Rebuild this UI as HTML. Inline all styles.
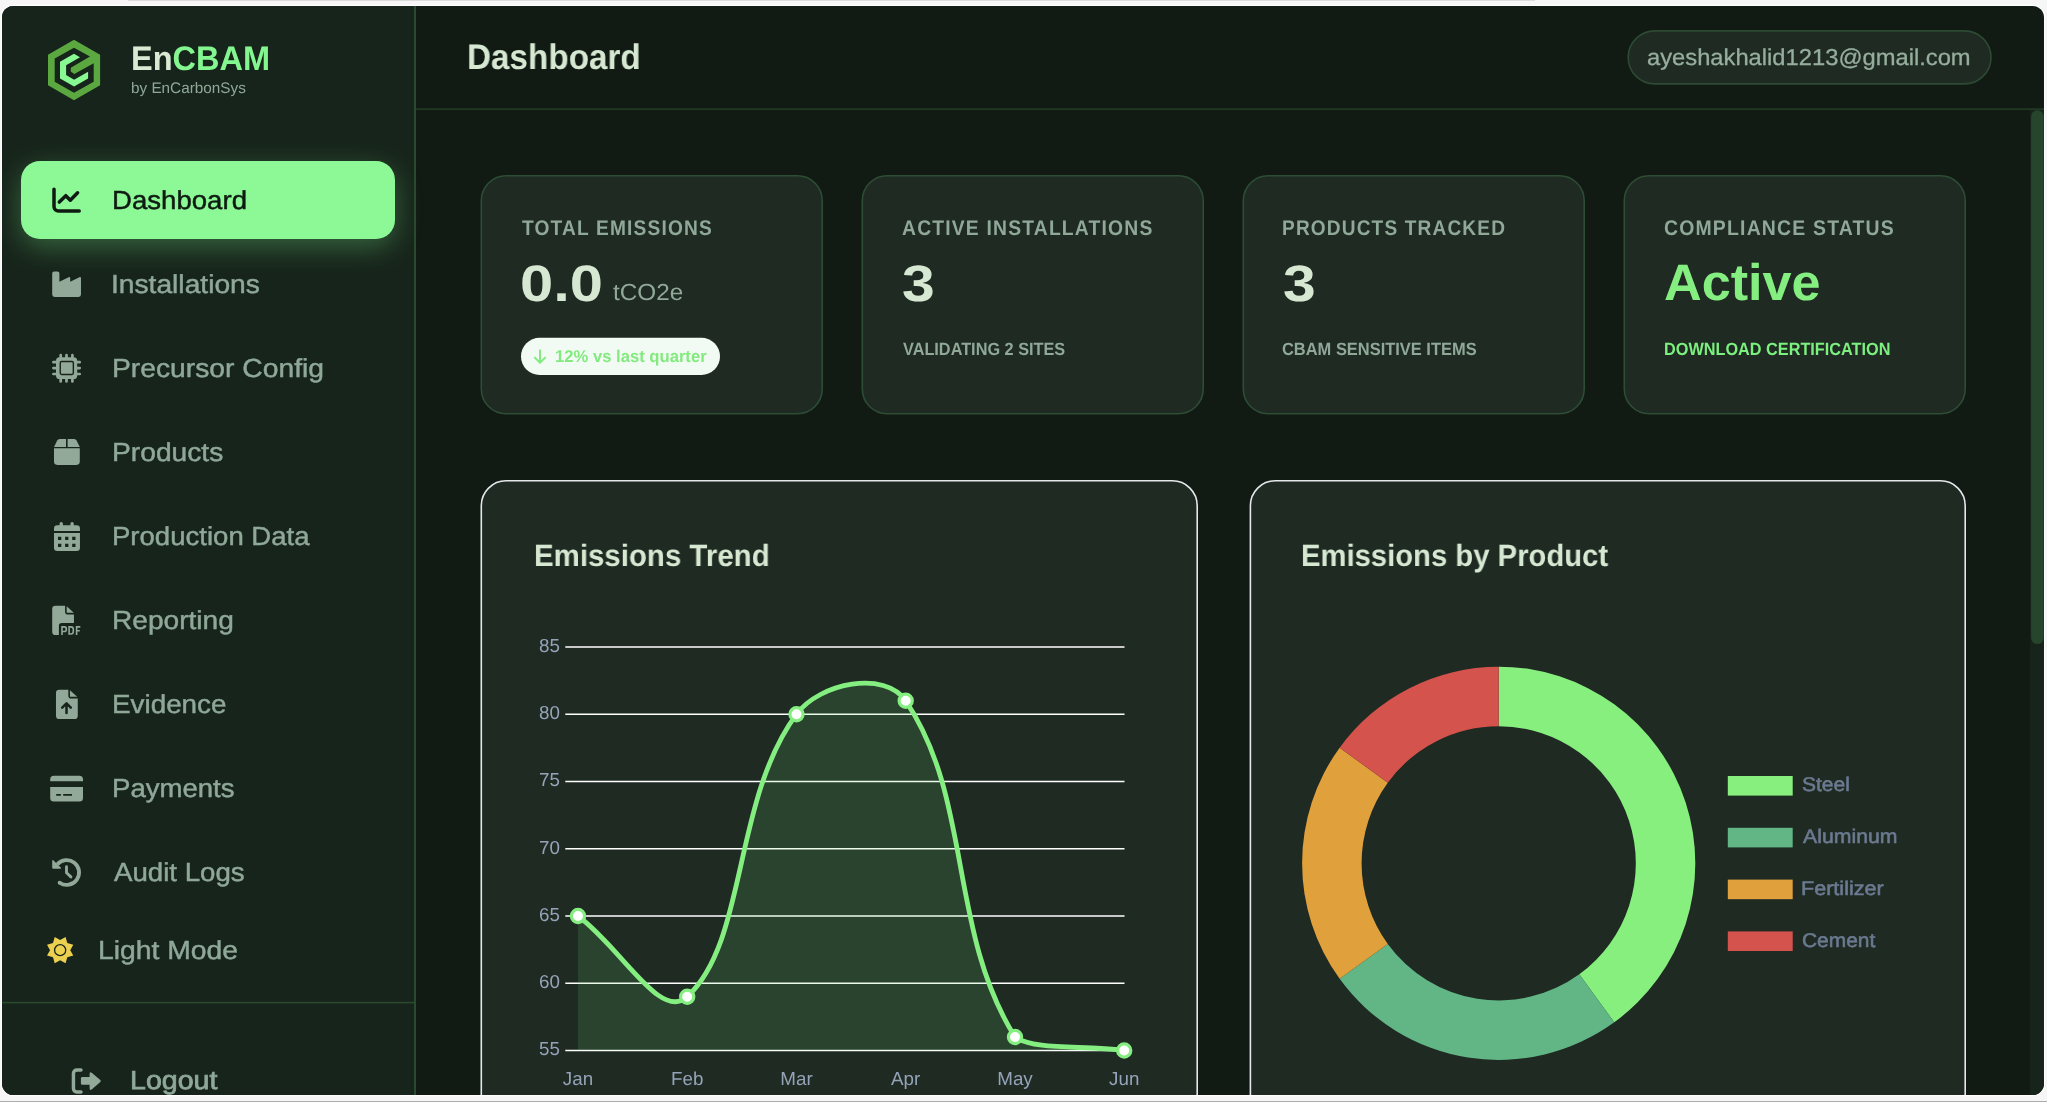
<!DOCTYPE html>
<html lang="en">
<head>
<meta charset="utf-8">
<title>EnCBAM Dashboard</title>
<style>
*{box-sizing:border-box;margin:0;padding:0}
html,body{width:2047px;height:1102px;overflow:hidden;background:#f6f6f6;font-family:"Liberation Sans",sans-serif;}
.abs{position:absolute}
#win{position:absolute;left:2px;top:6px;width:2042px;height:1089.2px;border-radius:11.5px;overflow:hidden;background:#111a13;box-shadow:0 0 0 1.2px #ffffff}
#botline{position:absolute;left:0;top:1101px;width:2047px;height:1px;background:#a9adab}
#topline{position:absolute;left:128px;top:0;width:1407px;height:1px;background:#dcdcdc}
#stage{position:absolute;left:-2px;top:-6px;width:2047px;height:1102px}
#sidebar{position:absolute;left:2px;top:6px;width:412px;height:1090px;background:#17241b}
.t{position:absolute;white-space:nowrap;line-height:1;transform-origin:0 0;text-rendering:geometricPrecision}
svg text{text-rendering:geometricPrecision}
#stage{will-change:transform}
.ax{fill:#94a3b8;font-size:18.8px;font-family:"Liberation Sans",sans-serif}
.lg{fill:#66758a;font-size:19.4px;font-weight:bold;font-family:"Liberation Sans",sans-serif}
</style>
</head>
<body>
<div id="topline"></div>
<div id="win"><div id="stage">
  <div id="sidebar"></div>
  <!-- active nav pill -->
  <div class="abs" id="active" style="left:21px;top:161px;width:374px;height:78px;border-radius:19px;background:#8cf996;box-shadow:0 8px 28px rgba(120,240,140,0.32)"></div>

  <svg class="abs" id="boxes" style="left:0;top:0" width="2047" height="1102" viewBox="0 0 2047 1102">
    <!-- sidebar border, divider, header border -->
    <rect x="414" y="6" width="2" height="1090" fill="#2a4a30"/>
    <rect x="2" y="1001.8" width="412" height="1.6" fill="#2a4a30"/>
    <rect x="416" y="108.35" width="1628" height="1.6" fill="#223c27"/>
    <!-- scrollbar -->
    <rect x="2030" y="110" width="14" height="986" fill="#17241b"/>
    <rect x="2031.1" y="110.3" width="12.6" height="533.7" rx="6.3" fill="#27442d"/>
    <!-- email pill -->
    <rect x="1628.2" y="30.9" width="362.8" height="53" rx="26.5" fill="#1f2a23" stroke="#2d4a33" stroke-width="1.6"/>
    <!-- stat cards -->
    <g fill="#1f2a23" stroke="#2d4d35" stroke-width="1.6">
      <rect x="481.3" y="175.7" width="340.9" height="238.1" rx="24.8"/>
      <rect x="862.3" y="175.7" width="340.9" height="238.1" rx="24.8"/>
      <rect x="1243.3" y="175.7" width="340.9" height="238.1" rx="24.8"/>
      <rect x="1624.3" y="175.7" width="340.9" height="238.1" rx="24.8"/>
    </g>
    <rect x="521" y="337.8" width="199" height="37.2" rx="18.6" fill="#f2fbf3"/>
    <!-- chart cards -->
    <g fill="#1f2a23" stroke="#e5e7eb" stroke-width="1.6">
      <rect x="481.3" y="480.8" width="715.9" height="700" rx="24.8"/>
      <rect x="1250.4" y="480.8" width="714.8" height="700" rx="24.8"/>
    </g>
  </svg>

  <div class="t" id="brand" style="left:130.57px;top:42.01px;font-size:34.01px;transform-origin:0 28.79px;transform:scale(0.9560,1.0000);font-weight:bold;color:#dbe8d4">En<span style="color:#84f690">CBAM</span></div>
  <div class="t" id="brandsub" style="left:131.16px;top:81.48px;font-size:15.26px;transform-origin:0 12.92px;transform:scale(1.0032,1.0000);color:#8fa898">by EnCarbonSys</div>
  <div class="t" id="n0" style="left:111.75px;top:187.38px;font-size:26.02px;transform-origin:0 22.02px;transform:scale(1.0607,1.0000);-webkit-text-stroke:0.45px;color:#0f1a12">Dashboard</div>
  <div class="t" id="n1" style="left:111.45px;top:271.38px;font-size:26.02px;transform-origin:0 22.02px;transform:scale(1.0835,1.0000);-webkit-text-stroke:0.45px;color:#8fa898">Installations</div>
  <div class="t" id="n2" style="left:111.75px;top:355.38px;font-size:26.02px;transform-origin:0 22.02px;transform:scale(1.0861,1.0000);-webkit-text-stroke:0.45px;color:#8fa898">Precursor Config</div>
  <div class="t" id="n3" style="left:111.75px;top:439.38px;font-size:26.02px;transform-origin:0 22.02px;transform:scale(1.0838,1.0000);-webkit-text-stroke:0.45px;color:#8fa898">Products</div>
  <div class="t" id="n4" style="left:111.79px;top:523.38px;font-size:26.02px;transform-origin:0 22.02px;transform:scale(1.0589,1.0000);-webkit-text-stroke:0.45px;color:#8fa898">Production Data</div>
  <div class="t" id="n5" style="left:111.76px;top:607.38px;font-size:26.02px;transform-origin:0 22.02px;transform:scale(1.0804,1.0000);-webkit-text-stroke:0.45px;color:#8fa898">Reporting</div>
  <div class="t" id="n6" style="left:111.77px;top:691.38px;font-size:26.02px;transform-origin:0 22.02px;transform:scale(1.0696,1.0000);-webkit-text-stroke:0.45px;color:#8fa898">Evidence</div>
  <div class="t" id="n7" style="left:111.79px;top:775.38px;font-size:26.02px;transform-origin:0 22.02px;transform:scale(1.0592,1.0000);-webkit-text-stroke:0.45px;color:#8fa898">Payments</div>
  <div class="t" id="n8" style="left:113.85px;top:859.38px;font-size:26.02px;transform-origin:0 22.02px;transform:scale(1.0631,1.0000);-webkit-text-stroke:0.45px;color:#8fa898">Audit Logs</div>
  <div class="t" id="n9" style="left:98.28px;top:937.38px;font-size:26.02px;transform-origin:0 22.02px;transform:scale(1.0883,1.0000);-webkit-text-stroke:0.45px;color:#8fa898">Light Mode</div>
  <div class="t" id="logout" style="left:130.39px;top:1067.25px;font-size:26.16px;transform-origin:0 22.15px;transform:scale(1.0920,1.0000);-webkit-text-stroke:0.75px;color:#8fa898">Logout</div>
  <div class="t" id="htitle" style="left:467.31px;top:40.08px;font-size:35.47px;transform-origin:0 30.02px;transform:scale(0.9378,1.0000);font-weight:bold;color:#d6e8d2">Dashboard</div>
  <div class="t" id="email" style="left:1647.44px;top:45.66px;font-size:22.97px;transform-origin:0 19.44px;transform:scale(1.0335,1.0000);-webkit-text-stroke:0.3px;color:#96ae9c">ayeshakhalid1213@gmail.com</div>
  <div class="t" id="l1" style="left:521.62px;top:217.84px;font-size:21.22px;transform-origin:0 17.96px;transform:scale(0.9020,1.0000);letter-spacing:1.3px;font-weight:bold;color:#8fa898">TOTAL EMISSIONS</div>
  <div class="t" id="b1" style="left:520.40px;top:258.17px;font-size:51.31px;transform-origin:0 43.43px;transform:scale(1.1636,1.0000);font-weight:bold;color:#d6e8d2">0.0</div>
  <div class="t" id="unit" style="left:612.65px;top:280.81px;font-size:23.26px;transform-origin:0 19.69px;transform:scale(1.0447,1.0000);color:#8fa898">tCO2e</div>
  <div class="t" id="badget" style="left:555.15px;top:348.20px;font-size:17.01px;transform-origin:0 14.40px;transform:scale(0.9785,1.0000);font-weight:bold;color:#84ea80">12% vs last quarter</div>
  <div class="t" id="l2" style="left:902.22px;top:217.84px;font-size:21.22px;transform-origin:0 17.96px;transform:scale(0.9102,1.0000);letter-spacing:1.3px;font-weight:bold;color:#8fa898">ACTIVE INSTALLATIONS</div>
  <div class="t" id="b2" style="left:902.21px;top:258.17px;font-size:51.31px;transform-origin:0 43.43px;transform:scale(1.1468,1.0000);font-weight:bold;color:#d6e8d2">3</div>
  <div class="t" id="s2" style="left:902.85px;top:341.39px;font-size:17.73px;transform-origin:0 15.01px;transform:scale(0.9187,1.0000);font-weight:bold;color:#8fa898">VALIDATING 2 SITES</div>
  <div class="t" id="l3" style="left:1281.90px;top:217.84px;font-size:21.22px;transform-origin:0 17.96px;transform:scale(0.8983,1.0000);letter-spacing:1.3px;font-weight:bold;color:#8fa898">PRODUCTS TRACKED</div>
  <div class="t" id="b3" style="left:1283.21px;top:258.17px;font-size:51.31px;transform-origin:0 43.43px;transform:scale(1.1468,1.0000);font-weight:bold;color:#d6e8d2">3</div>
  <div class="t" id="s3" style="left:1282.43px;top:341.39px;font-size:17.73px;transform-origin:0 15.01px;transform:scale(0.9280,1.0000);font-weight:bold;color:#8fa898">CBAM SENSITIVE ITEMS</div>
  <div class="t" id="l4" style="left:1663.83px;top:217.84px;font-size:21.22px;transform-origin:0 17.96px;transform:scale(0.9151,1.0000);letter-spacing:1.3px;font-weight:bold;color:#8fa898">COMPLIANCE STATUS</div>
  <div class="t" id="b4" style="left:1663.75px;top:256.77px;font-size:51.31px;transform-origin:0 43.43px;transform:scale(1.0174,1.0000);font-weight:bold;color:#84ee80">Active</div>
  <div class="t" id="s4" style="left:1663.51px;top:341.39px;font-size:17.73px;transform-origin:0 15.01px;transform:scale(0.9176,1.0000);font-weight:bold;color:#7cf07e">DOWNLOAD CERTIFICATION</div>
  <div class="t" id="ct1" style="left:533.73px;top:541.32px;font-size:30.81px;transform-origin:0 26.08px;transform:scale(0.9561,1.0000);font-weight:bold;color:#d6e8d2">Emissions Trend</div>
  <div class="t" id="ct2" style="left:1301.40px;top:541.32px;font-size:30.81px;transform-origin:0 26.08px;transform:scale(0.9494,1.0000);font-weight:bold;color:#d6e8d2">Emissions by Product</div>
  <div class="t" id="lg1" style="left:1801.95px;top:775.67px;font-size:19.77px;transform-origin:0 16.73px;transform:scale(1.0615,1.0000);-webkit-text-stroke:0.55px;color:#6b7a90">Steel</div>
  <div class="t" id="lg2" style="left:1802.98px;top:828.21px;font-size:19.77px;transform-origin:0 16.73px;transform:scale(1.0755,1.0000);-webkit-text-stroke:0.55px;color:#6b7a90">Aluminum</div>
  <div class="t" id="lg3" style="left:1801.34px;top:880.01px;font-size:19.77px;transform-origin:0 16.73px;transform:scale(1.0911,1.0000);-webkit-text-stroke:0.55px;color:#6b7a90">Fertilizer</div>
  <div class="t" id="lg4" style="left:1802.17px;top:931.81px;font-size:19.77px;transform-origin:0 16.73px;transform:scale(1.0596,1.0000);-webkit-text-stroke:0.55px;color:#6b7a90">Cement</div>

  <svg class="abs" id="icons" style="left:0;top:0" width="2047" height="1102" viewBox="0 0 2047 1102">
    <!-- logo -->
    <path fill="#5ba840" fill-rule="evenodd" d="M74 39.7 L100.1 54.7 L100.1 85.3 L74 100.3 L48 85.3 L48 54.7 Z M74 47.7 L90 56.6 L70.8 67.7 L70.8 71.5 L74.3 74.1 L93.7 63.2 L93.7 81.7 L74 92.8 L54.7 81.7 L54.7 58.6 Z"/>
    <path fill="#88f892" d="M74 53.7 L80 57.2 L66.1 65.2 L66.1 74.9 L74.1 79.8 L88.1 71.8 L88.1 78.6 L74.1 86.5 L60 78.6 L60 61.8 Z"/>

    <!-- dashboard: chart-line -->
    <g fill="none" stroke="#0f1a12" stroke-width="3.5" stroke-linecap="round" stroke-linejoin="round">
      <path d="M54 189.2 V206.5 a4.5 4.5 0 0 0 4.5 4.5 H79.2"/>
      <path d="M59.3 202.1 L65.8 195.7 L70.3 200.2 L77.6 192.8"/>
    </g>

    <g fill="#92a898">
    <!-- installations: industry -->
    <path d="M54.2 271.4 H57.6 Q59.4 271.4 59.4 273.2 V281.8 L68.6 277.2 Q70.2 276.5 70.2 278.2 V281.8 L79.4 277.2 Q81 276.5 81 278.2 V294.5 Q81 296.9 78.6 296.9 H54.6 Q52.2 296.9 52.2 294.5 V273.2 Q52.2 271.4 54.2 271.4 Z"/>

    <!-- microchip -->
    <rect x="56" y="357.2" width="21.2" height="21.8" rx="3.6"/>
    <g stroke="#92a898" stroke-width="2.7" stroke-linecap="round">
      <path d="M60.7 355.2V358M66.5 355.2V358M72.4 355.2V358M60.7 378V381.5M66.5 378V381.5M72.4 378V381.5"/>
      <path d="M53.4 362.2H57M53.4 368.1H57M53.4 374H57M76 362.2H79.7M76 368.1H79.7M76 374H79.7"/>
    </g>
    <rect x="60.25" y="361.55" width="13.1" height="12.9" rx="1.4" fill="none" stroke="#17241b" stroke-width="1.4"/>

    <!-- products: box -->
    <path d="M54 448.2 H79.8 V461.6 Q79.8 464.9 76.5 464.9 H57.3 Q54 464.9 54 461.6 Z"/>
    <path d="M54 446.9 L57.2 440.6 Q58 439.1 59.7 439.1 H66 V446.9 Z"/>
    <path d="M79.8 446.9 L76.6 440.6 Q75.8 439.1 74.1 439.1 H67.6 V446.9 Z"/>

    <!-- production data: calendar -->
    <path d="M54 530.9 V528.6 Q54 525.3 57.3 525.3 H59.55 V523.7 a1.7 1.7 0 0 1 3.4 0 V525.3 H70.4 V523.7 a1.7 1.7 0 0 1 3.4 0 V525.3 H76.65 Q79.95 525.3 79.95 528.6 V530.9 Z"/>
    <path fill-rule="evenodd" d="M54 532.9 H79.95 V547.7 Q79.95 551 76.65 551 H57.3 Q54 551 54 547.7 Z M58 536.7h3.3v3.3h-3.3z M65.1 536.7h3.3v3.3h-3.3z M72.2 536.7h3.3v3.3h-3.3z M58 543.8h3.3v3.3h-3.3z M65.1 543.8h3.3v3.3h-3.3z M72.2 543.8h3.3v3.3h-3.3z"/>

    <!-- reporting: file-pdf -->
    <path d="M55.5 605.8 H65.06 V611.7 Q65.06 614.5 67.9 614.5 H73.96 V623.06 H61.6 Q58.9 623.06 58.9 625.8 V635.04 H55.5 Q52.2 635.04 52.2 631.7 V609.1 Q52.2 605.8 55.5 605.8 Z"/>
    <path d="M66.7 606.2 L73.8 612.8 H66.7 Z"/>
    <g fill="none" stroke="#92a898" stroke-width="1.6">
      <path d="M62 634.9V626.9H64.3Q66.4 626.9 66.4 629.2Q66.4 631.5 64.3 631.5H62"/>
      <path d="M69.1 626.9V634H70.9Q73.3 634 73.3 631.6V629.3Q73.3 626.9 70.9 626.9Z"/>
      <path d="M76.6 634.9V626.9H80.3M76.6 630.7H79.8"/>
    </g>

    <!-- evidence: file-arrow-up -->
    <path d="M59.3 689.8 H68.33 V695.7 Q68.33 698.5 71.2 698.5 H77.77 V715.7 Q77.77 719.04 74.4 719.04 H59.3 Q55.98 719.04 55.98 715.7 V693.1 Q55.98 689.8 59.3 689.8 Z"/>
    <path d="M69.96 690.2 L77.2 696.8 H69.96 Z"/>
    <g fill="none" stroke="#17241b" stroke-width="2.5" stroke-linecap="round" stroke-linejoin="round">
      <path d="M66.5 713 V703.6 M62.2 707.6 L66.5 703.3 L70.8 707.6"/>
    </g>

    <!-- payments: credit card -->
    <path d="M50.2 781.25 V779.4 Q50.2 775.8 53.8 775.8 H79.4 Q83 775.8 83 779.4 V781.25 Z"/>
    <path fill-rule="evenodd" d="M50.2 787.06 H83 V798 Q83 801.6 79.4 801.6 H53.8 Q50.2 801.6 50.2 798 Z M56.2 794.1h4.7v1.7h-4.7z M63.2 794.1h8.8v1.7h-8.8z"/>

    <!-- audit logs: clock-rotate-left -->
    <path d="M53.5 860.4 Q52.2 859.3 52.2 861.1 V867.5 Q52.2 868.7 53.4 868.7 H60.1 Q61.9 868.7 60.7 867.4 Z"/>
    <g fill="none" stroke="#92a898" stroke-linecap="round" stroke-linejoin="round">
      <path stroke-width="3.8" stroke-linecap="butt" d="M57.2 864.53 A12.4 12.4 0 1 1 59.7 882.75"/>
      <path stroke-width="2.9" d="M66.5 866.7 V872.8 L70.9 876.9"/>
    </g>
    <circle cx="59.6" cy="882.7" r="1.9"/>

    <!-- logout: right-from-bracket -->
    <path fill="none" stroke="#92a898" stroke-width="3.45" stroke-linecap="round" d="M81 1070 H76.8 A3.35 3.35 0 0 0 73.45 1073.35 V1088.6 A3.35 3.35 0 0 0 76.8 1091.95 H81"/>
    <path d="M82.4 1077.06 H89.6 V1074 Q89.6 1071.2 92 1073 L100.3 1080.1 Q101.4 1081.06 100.3 1082 L92 1089.2 Q89.6 1091 89.6 1088.2 V1084.87 H82.4 Q80.9 1084.87 80.9 1083.4 V1078.5 Q80.9 1077.06 82.4 1077.06 Z"/>
    </g>

    <!-- light mode: sun -->
    <path fill="#ecd04f" d="M60.15 940.05 L65.58 937.03 L67.29 943.01 L73.27 944.72 L70.25 950.15 L73.27 955.58 L67.29 957.29 L65.58 963.27 L60.15 960.25 L54.72 963.27 L53.01 957.29 L47.03 955.58 L50.05 950.15 L47.03 944.72 L53.01 943.01 L54.72 937.03 Z"/>
    <circle cx="60.15" cy="950.15" r="5.55" fill="none" stroke="#17241b" stroke-width="1.3"/>

    <!-- badge arrow -->
    <path d="M540 350.3 V362.4 M534.9 357.6 L540 362.7 L545.1 357.6" fill="none" stroke="#84ea80" stroke-width="2" stroke-linecap="round" stroke-linejoin="round"/>
  </svg>


  <svg class="abs" id="charts" style="left:0;top:0" width="2047" height="1102" viewBox="0 0 2047 1102">
    <g stroke="#ffffff" stroke-width="1.6">
      <path d="M565.3 647H1124.5M565.3 714.25H1124.5M565.3 781.5H1124.5M565.3 848.75H1124.5M565.3 916H1124.5M565.3 983.25H1124.5M565.3 1050.5H1124.5"/>
    </g>
    <path fill="rgba(110,220,110,0.14)" d="M578.0 916.0 C621.7 948.3 660.2 1021.7 687.2 996.7 C747.6 941.0 732.4 801.1 796.5 714.2 C819.8 682.7 885.0 670.1 905.7 700.8 C972.4 799.3 948.3 930.4 1015.0 1037.0 C1035.7 1050.5 1080.5 1045.1 1124.2 1050.5 L1124.2 1050.5 L578 1050.5 Z"/>
    <path fill="none" stroke="#84ee80" stroke-width="4.8" stroke-linecap="round" d="M578.0 916.0 C621.7 948.3 660.2 1021.7 687.2 996.7 C747.6 941.0 732.4 801.1 796.5 714.2 C819.8 682.7 885.0 670.1 905.7 700.8 C972.4 799.3 948.3 930.4 1015.0 1037.0 C1035.7 1050.5 1080.5 1045.1 1124.2 1050.5"/>
    <g fill="#ffffff" stroke="#84ee80" stroke-width="3.2">
      <circle cx="578.0" cy="916.0" r="6.6"/><circle cx="687.2" cy="996.7" r="6.6"/><circle cx="796.5" cy="714.2" r="6.6"/><circle cx="905.7" cy="700.8" r="6.6"/><circle cx="1015.0" cy="1037.0" r="6.6"/><circle cx="1124.2" cy="1050.5" r="6.6"/>
    </g>
    <g class="ax" text-anchor="end">
      <text x="560" y="651.8">85</text><text x="560" y="719.05">80</text><text x="560" y="786.3">75</text><text x="560" y="853.55">70</text>
      <text x="560" y="920.8">65</text><text x="560" y="988.05">60</text><text x="560" y="1055.3">55</text>
    </g>
    <g class="ax" text-anchor="middle">
      <text x="578" y="1085">Jan</text><text x="687.2" y="1085">Feb</text><text x="796.5" y="1085">Mar</text><text x="905.7" y="1085">Apr</text><text x="1015" y="1085">May</text><text x="1124.2" y="1085">Jun</text>
    </g>
    <g id="donut">
<path fill="#86ef7e" d="M1498.70 666.70 A196.6 196.6 0 0 1 1614.26 1022.35 L1579.29 974.22 A137.1 137.1 0 0 0 1498.70 726.20 Z"/>
<path fill="#62b685" d="M1614.26 1022.35 A196.6 196.6 0 0 1 1339.65 978.86 L1387.78 943.89 A137.1 137.1 0 0 0 1579.29 974.22 Z"/>
<path fill="#e0a03c" d="M1339.65 978.86 A196.6 196.6 0 0 1 1339.65 747.74 L1387.78 782.71 A137.1 137.1 0 0 0 1387.78 943.89 Z"/>
<path fill="#d4534c" d="M1339.65 747.74 A196.6 196.6 0 0 1 1498.70 666.70 L1498.70 726.20 A137.1 137.1 0 0 0 1387.78 782.71 Z"/>
    </g>
    <g>
      <rect x="1727.8" y="776" width="64.9" height="19.6" fill="#86ef7e"/>
      <rect x="1727.8" y="827.8" width="64.9" height="19.6" fill="#62b685"/>
      <rect x="1727.8" y="879.6" width="64.9" height="19.6" fill="#e0a03c"/>
      <rect x="1727.8" y="931.4" width="64.9" height="19.6" fill="#d4534c"/>
    </g>
    
  </svg>

</div></div>
<div id="botline"></div>
</body>
</html>
